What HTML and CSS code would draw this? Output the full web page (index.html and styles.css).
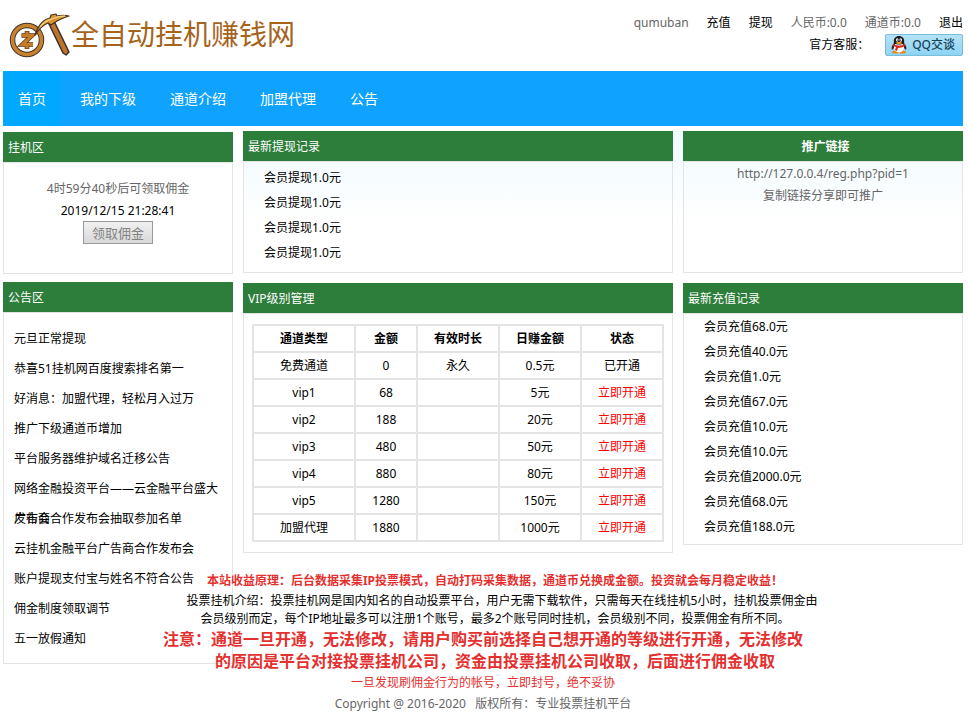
FILE: index.html
```html
<!DOCTYPE html>
<html lang="zh-CN">
<head>
  <meta charset="UTF-8">
  <title>全自动挂机赚钱网</title>
  <link rel="stylesheet" href="styles.css">
</head>
<body>
  <header class="top">
    <a class="logo" href="#">
      <svg class="logo-icon" viewBox="0 0 62 48" aria-hidden="true">
        <circle cx="18" cy="30" r="14.5" fill="#fff" stroke="#3f3430" stroke-width="5.5"/>
        <circle cx="18" cy="30" r="14.5" fill="none" stroke="#c9812b" stroke-width="3.6"/>
        <path d="M12.5 25.5H23L13.5 34.5H24M18 21v4M18 35v4" fill="none" stroke="#56351c" stroke-width="4.6"/>
        <path d="M12.5 25.5H23L13.5 34.5H24M18 21.5v4M18 35v3.5" fill="none" stroke="#c77b22" stroke-width="3.2"/>
        <path d="M39 12l5-3 16 33-3 3-3-2z" fill="#bd7428" stroke="#38302d" stroke-width="1.5" stroke-linejoin="round"/>
        <path d="M26 25c3-10 9-16 15-17l1-3 5-1 1 2c4-1 8-1 12 0-4 1-8 3-12 5l-6 4-3-2c-5 2-9 6-13 12z" fill="#d7932f" stroke="#463127" stroke-width="1.2" stroke-linejoin="round"/>
        <path d="M31 17c4-5 8-7 12-8 4-2 9-3 13-3" fill="none" stroke="#f4cf71" stroke-width="1.3"/>
      </svg>
      <span class="logo-text">全自动挂机赚钱网</span>
    </a>
    <div class="user">
      <div class="user-row">
        <span>qumuban</span>
        <a href="#">充值</a>
        <a href="#">提现</a>
        <span>人民币:0.0</span>
        <span>通道币:0.0</span>
        <a href="#">退出</a>
      </div>
      <div class="service">
        <span>官方客服：</span>
        <a class="qq" href="#">
          <svg class="qq-icon" viewBox="0 0 16 18" aria-hidden="true">
            <ellipse cx="4.5" cy="16" rx="3.5" ry="1.6" fill="#e98a1c"/>
            <ellipse cx="11.5" cy="16" rx="3.5" ry="1.6" fill="#e98a1c"/>
            <path d="M3 7C1 9 0 12 1 14l2-2h10l2 2c1-2 0-5-2-7z" fill="#3b2524"/>
            <ellipse cx="8" cy="11.5" rx="5" ry="5" fill="#fff"/>
            <path d="M3 7C2 2 5 0 8 0s6 2 5 7c-2 2-8 2-10 0z" fill="#241a1c"/>
            <ellipse cx="6.3" cy="4" rx="1.3" ry="1.7" fill="#fff"/>
            <ellipse cx="9.7" cy="4" rx="1.3" ry="1.7" fill="#fff"/>
            <circle cx="6.7" cy="4.2" r=".6"/>
            <circle cx="9.3" cy="4.2" r=".6"/>
            <ellipse cx="8" cy="7" rx="3" ry="1" fill="#f0a51e"/>
            <path d="M2 8c4 2 8 2 12 0v2c-2 1-5 2-7 2l-1 3-2-1 1-3-3-1z" fill="#d8281f"/>
          </svg>
          QQ交谈
        </a>
      </div>
    </div>
  </header>

  <nav class="nav">
    <a class="active" href="#">首页</a>
    <a href="#">我的下级</a>
    <a href="#">通道介绍</a>
    <a href="#">加盟代理</a>
    <a href="#">公告</a>
  </nav>

  <div class="page">
    <aside class="side">
      <section>
        <h3>挂机区</h3>
        <div class="box work">
          <p class="countdown">4时59分40秒后可领取佣金</p>
          <p class="clock">2019/12/15 21:28:41</p>
          <button class="get" type="button" disabled>领取佣金</button>
        </div>
      </section>
      <section>
        <h3>公告区</h3>
        <ul class="box notice">
          <li><a href="#">元旦正常提现</a></li>
          <li><a href="#">恭喜51挂机网百度搜索排名第一</a></li>
          <li><a href="#">好消息：加盟代理，轻松月入过万</a></li>
          <li><a href="#">推广下级通道币增加</a></li>
          <li><a href="#">平台服务器维护域名迁移公告</a></li>
          <li><a href="#">网络金融投资平台——云金融平台盛大发布会</a></li>
          <li><a href="#">广告商合作发布会抽取参加名单</a></li>
          <li><a href="#">云挂机金融平台广告商合作发布会</a></li>
          <li><a href="#">账户提现支付宝与姓名不符合公告</a></li>
          <li><a href="#">佣金制度领取调节</a></li>
          <li><a href="#">五一放假通知</a></li>
        </ul>
      </section>
    </aside>

    <main class="main">
      <section>
        <h3>最新提现记录</h3>
        <ul class="box record withdraw">
          <li>会员提现1.0元</li>
          <li>会员提现1.0元</li>
          <li>会员提现1.0元</li>
          <li>会员提现1.0元</li>
        </ul>
      </section>
      <section>
        <h3 class="center">推广链接</h3>
        <div class="box share">
          <p>http://127.0.0.4/reg.php?pid=1</p>
          <p>复制链接分享即可推广</p>
        </div>
      </section>
      <section>
        <h3>VIP级别管理</h3>
        <div class="box vip">
          <table>
            <thead>
              <tr><th class="type">通道类型</th><th class="price">金额</th><th>有效时长</th><th>日赚金额</th><th>状态</th></tr>
            </thead>
            <tbody>
              <tr><td>免费通道</td><td>0</td><td>永久</td><td>0.5元</td><td>已开通</td></tr>
              <tr><td>vip1</td><td>68</td><td></td><td>5元</td><td><a href="#">立即开通</a></td></tr>
              <tr><td>vip2</td><td>188</td><td></td><td>20元</td><td><a href="#">立即开通</a></td></tr>
              <tr><td>vip3</td><td>480</td><td></td><td>50元</td><td><a href="#">立即开通</a></td></tr>
              <tr><td>vip4</td><td>880</td><td></td><td>80元</td><td><a href="#">立即开通</a></td></tr>
              <tr><td>vip5</td><td>1280</td><td></td><td>150元</td><td><a href="#">立即开通</a></td></tr>
              <tr><td>加盟代理</td><td>1880</td><td></td><td>1000元</td><td><a href="#">立即开通</a></td></tr>
            </tbody>
          </table>
        </div>
      </section>
      <section>
        <h3>最新充值记录</h3>
        <ul class="box record">
          <li>会员充值68.0元</li>
          <li>会员充值40.0元</li>
          <li>会员充值1.0元</li>
          <li>会员充值67.0元</li>
          <li>会员充值10.0元</li>
          <li>会员充值10.0元</li>
          <li>会员充值2000.0元</li>
          <li>会员充值68.0元</li>
          <li>会员充值188.0元</li>
        </ul>
      </section>
    </main>

    <footer class="footer">
      <p class="rule indent">本站收益原理：后台数据采集IP投票模式，自动打码采集数据，通道币兑换成金额。投资就会每月稳定收益！</p>
      <p class="intro indent">投票挂机介绍：投票挂机网是国内知名的自动投票平台，用户无需下载软件，只需每天在线挂机5小时，挂机投票佣金由<br>会员级别而定，每个IP地址最多可以注册1个账号，最多2个账号同时挂机，会员级别不同，投票佣金有所不同。</p>
      <p class="warn">注意：通道一旦开通，无法修改，请用户购买前选择自己想开通的等级进行开通，无法修改</p>
      <p class="warn indent">的原因是平台对接投票挂机公司，资金由投票挂机公司收取，后面进行佣金收取</p>
      <p class="ban">一旦发现刷佣金行为的帐号，立即封号，绝不妥协</p>
      <p class="copy">Copyright @ 2016-2020 &nbsp; 版权所有：专业投票挂机平台</p>
    </footer>
  </div>
</body>
</html>
```

FILE: styles.css
```css
* {
  box-sizing: border-box;
  margin: 0;
  padding: 0;
}
body {
  padding: 0 5px 0 3px;
  background: #fff;
  color: #000;
  font-family: "Noto Sans", "Noto Sans CJK SC", sans-serif;
  font-size: 12px;
  line-height: 22px;
}
ul {
  list-style: none;
}
a {
  color: #000;
  text-decoration: none;
}

/* header */
.top {
  display: flex;
  justify-content: space-between;
  height: 71px;
}
.logo {
  display: flex;
  align-items: center;
  padding: 0 0 4px 6px;
}
.logo-icon {
  width: 62px;
  height: 48px;
}
.logo-text {
  color: #a5631b;
  font-size: 28px;
  line-height: 48px;
}
.user {
  padding-top: 12px;
}
.user-row {
  display: flex;
  justify-content: flex-end;
  gap: 18px;
  color: #666;
}
.service {
  display: flex;
  justify-content: flex-end;
  align-items: center;
  gap: 16px;
}
.qq {
  display: flex;
  align-items: center;
  gap: 5px;
  height: 22px;
  padding: 0 7px 0 5px;
  border: 1px solid #79bddb;
  border-radius: 2px;
  background: linear-gradient(#b5e3f8, #8dd3f4);
  color: #17445c;
  font-weight: 500;
}
.qq-icon {
  width: 16px;
  height: 18px;
}

/* nav */
.nav {
  display: flex;
  gap: 4px;
  background: #0fa2ff;
}
.nav a {
  padding: 0 15px;
  color: #fff;
  font-size: 14px;
  line-height: 55px;
}
.nav .active {
  background: #00a8ff;
}

/* the notice list reaches down beside the footer */
.page {
  display: grid;
  grid-template-columns: 230px 1fr;
  column-gap: 10px;
  padding-top: 5px;
}
.side {
  grid-area: 1 / 1 / 3 / 2;
  display: flex;
  flex-direction: column;
  gap: 8px;
  padding-top: 1px;
}
.main {
  grid-area: 1 / 2;
  display: grid;
  grid-template-columns: 1fr 280px;
  gap: 10px;
  align-items: start;
  background: linear-gradient(#effaff, #fff 90px);
}
.footer {
  grid-area: 2 / 1 / 3 / 3;
  padding-top: 17px;
  text-align: center;
}

h3 {
  height: 30px;
  padding-left: 5px;
  background: #2d7d3b;
  color: #fff;
  font-size: 12px;
  font-weight: normal;
  line-height: 32px;
}
h3.center {
  font-weight: bold;
  text-align: center;
}
.box {
  border: 1px solid #e4e4e4;
}
.work,
.withdraw,
.share {
  height: 112px;
}
.work {
  padding-top: 14px;
  text-align: center;
}
.clock {
  line-height: 20px;
}
.get {
  display: block;
  width: 70px;
  height: 23px;
  margin: 0 auto;
  border: 1px solid #999;
  background: linear-gradient(#f1f1f1, #d8d8d8);
  color: #838383;
  font-family: inherit;
  font-size: 13px;
  line-height: 20px;
}
.countdown,
.share {
  color: #666;
}
.countdown {
  line-height: 24px;
}
.notice {
  padding: 11px 8px 9px 10px;
}
.notice li {
  height: 30px;
  line-height: 30px;
}
.record {
  padding: 0 20px 5px;
  line-height: 25px;
}
.withdraw {
  padding-top: 3px;
}
.share {
  padding-top: 1px;
  text-align: center;
}

/* vip table */
.vip {
  padding: 10px 8px;
}
table {
  width: 100%;
  border-collapse: collapse;
  table-layout: fixed;
  text-align: center;
}
th,
td {
  height: 27px;
  border: 2px solid #e4e4e4;
  line-height: 20px;
}
.type {
  width: 102px;
}
.price {
  width: 62px;
}
td a {
  color: #f00;
}

/* footer */
.indent {
  padding-left: 24px;
}
.rule,
.warn,
.ban {
  color: #e4302f;
}
.rule {
  font-weight: bold;
}
.intro {
  line-height: 18px;
  text-indent: 14px;
}
.warn {
  font-size: 16px;
  font-weight: bold;
}
.copy {
  color: #666;
  line-height: 20px;
}
```
